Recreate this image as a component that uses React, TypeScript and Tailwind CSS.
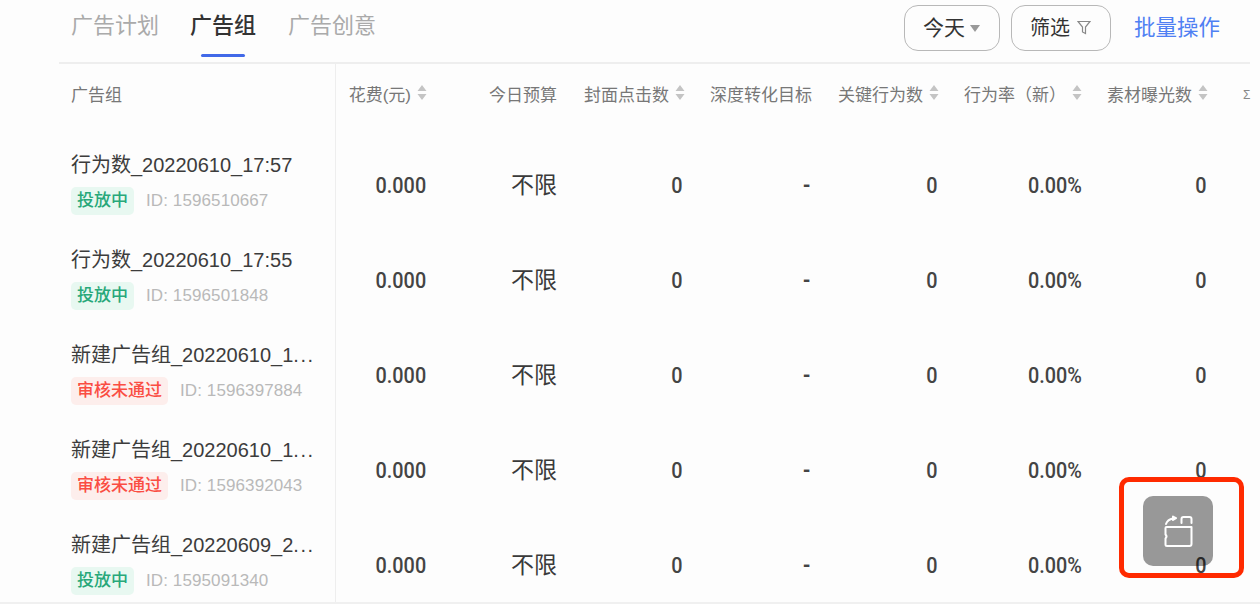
import React from "react";

const cjk = '"Liberation Sans","Noto Sans CJK SC",sans-serif';

function Sort() {
  return (
    <svg width="10" height="17" viewBox="0 0 10 17" className="ml-[6px] shrink-0">
      <path d="M5 1 L9.5 7 H0.5 Z M0.5 10 H9.5 L5 16 Z" fill="#c4c4c4" />
    </svg>
  );
}

const headers: { t: string; s?: boolean }[] = [
  { t: "花费(元)", s: true },
  { t: "今日预算" },
  { t: "封面点击数", s: true },
  { t: "深度转化目标" },
  { t: "关键行为数", s: true },
  { t: "行为率（新）", s: true },
  { t: "素材曝光数", s: true },
];

const rows = [
  { name: "行为数_20220610_17:57", more: false, tag: "投放中", id: "1596510667", ok: true },
  { name: "行为数_20220610_17:55", more: false, tag: "投放中", id: "1596501848", ok: true },
  { name: "新建广告组_20220610_1", more: true, tag: "审核未通过", id: "1596397884", ok: false },
  { name: "新建广告组_20220610_1", more: true, tag: "审核未通过", id: "1596392043", ok: false },
  { name: "新建广告组_20220609_2", more: true, tag: "投放中", id: "1595091340", ok: true },
];

const grid = "grid grid-cols-[336px_91px_130px_128px_127px_127px_143px_126px_52px]";

function Num({ v, pr, dash }: { v: string; pr: string; dash?: boolean }) {
  return (
    <div className={"flex items-center justify-end " + pr}>
      <span
        className={
          "font-['Roboto'] text-[22px] text-[#444444] origin-right scale-x-[0.9] tracking-[0px] " +
          (dash ? "font-bold" : "font-medium")
        }
      >
        {v}
      </span>
    </div>
  );
}

function Watermark() {
  const tiles: React.ReactNode[] = [];
  for (let r = -3; r < 9; r++) {
    for (let c = -1; c < 5; c++) {
      tiles.push(
        <div
          key={`${r}-${c}`}
          className="absolute rotate-45 origin-top-left whitespace-nowrap text-[24px] leading-[35px] text-black/[0.022]"
          style={{ left: c * 340 + 54, top: r * 78 - 7 }}
        >
          wangyongwei
          <br />
          2022/06/10 19:12:26
        </div>
      );
    }
  }
  return <div className="absolute inset-0 overflow-hidden pointer-events-none">{tiles}</div>;
}

export default function App() {
  return (
    <div className="relative w-[1260px] h-[604px] overflow-hidden bg-[#fdfdfd]" style={{ fontFamily: cjk }}>
      <div className="ml-[59px] mr-[10px] h-[64px] border-b-2 border-[#eeeeee] flex items-start pl-[12px] pr-[30px]">
        <div className="flex text-[22px] text-[#aaaaaa] leading-[26px] pt-[13px] whitespace-nowrap">
          <span>广告计划</span>
          <span className="relative ml-[31px] font-medium text-[#333333]">
            广告组
            <span className="absolute left-[11px] top-[41px] w-[44px] h-[3px] rounded-full bg-[#4169e8]" />
          </span>
          <span className="ml-[32px]">广告创意</span>
        </div>
        <div className="ml-auto flex items-center pt-[5px] whitespace-nowrap">
          <div className="w-[96px] h-[46px] rounded-[14px] border border-[#b8b8b8] flex items-center pl-[18px] text-[21px] text-[#333333]">
            今天
            <svg width="10" height="7" viewBox="0 0 10 7" className="ml-[5px]">
              <path d="M0 0 H10 L5 7 Z" fill="#999999" />
            </svg>
          </div>
          <div className="ml-[11px] w-[100px] h-[46px] rounded-[14px] border border-[#b8b8b8] flex items-center pl-[18px] text-[20px] text-[#333333]">
            筛选
            <svg width="14" height="15" viewBox="0 0 14 15" className="ml-[7px] mb-[2px]" fill="none" stroke="#888888" strokeWidth="1.2">
              <path d="M1 1.5 H13 L8.5 7 V13.5 L5.5 12 V7 Z" />
            </svg>
          </div>
          <span className="ml-[23px] text-[21.5px] leading-[26px] text-[#4f80f3]">批量操作</span>
        </div>
      </div>

      <div className={grid + " h-[74px]"}>
        <div className="border-r border-[#eeeeee] pl-[71px] pt-[20px] text-[17px] text-[#777777] leading-[24px]">广告组</div>
        {headers.map((h, i) => (
          <div key={i} className="flex items-start justify-end pt-[20px] text-[17px] text-[#777777] leading-[24px] whitespace-nowrap">
            <span>{h.t}</span>
            {h.s ? <Sort /> : null}
          </div>
        ))}
        <div className="pl-[35px] pt-[24px] text-[12px] leading-[14px] text-[#888888] overflow-hidden">Σ</div>
      </div>

      {rows.map((r, i) => (
        <div key={i} className={grid + " h-[95px]"}>
          <div className="border-r border-[#eeeeee] pl-[71px] pt-[13px]">
            <div className="text-[20px] leading-[28px] text-[#3c3c3c] whitespace-nowrap">
              {r.name}
              {r.more ? <span className="tracking-[1.5px]">...</span> : null}
            </div>
            <div className="flex items-center mt-[8px]">
              <span
                className={
                  "h-[28px] px-[6px] rounded-[5px] flex items-center text-[17px] font-medium " +
                  (r.ok ? "bg-[#e8f8f1] text-[#28a87a]" : "bg-[#fdeeec] text-[#fa4d43]")
                }
              >
                {r.tag}
              </span>
              <span className="ml-[12px] text-[17px] tracking-[0.1px] text-[#b9b9b9]">ID: {r.id}</span>
            </div>
          </div>
          <Num v="0.000" pr="pr-[1px]" />
          <div className="flex items-center justify-end text-[23px] text-[#3a3a3a]">不限</div>
          <Num v="0" pr="pr-[2px]" />
          <Num v="-" pr="pr-[1px]" dash />
          <Num v="0" pr="pr-[1px]" />
          <Num v="0.00%" pr="pr-0" />
          <Num v="0" pr="pr-[1px]" />
          <div />
        </div>
      ))}

      <Watermark />
      <div className="absolute left-0 right-0 bottom-0 h-[2px] bg-[#f0f0f0]" />

      <div className="absolute left-[1119px] top-[477px] w-[125px] h-[101px] rounded-[10px] border-[5px] border-[#ff2a00]">
        <div className="absolute left-[19px] top-[14px] w-[70px] h-[70px] rounded-[10px] bg-black/40 flex items-center justify-center">
          <svg width="30" height="34" viewBox="0 0 30 34" fill="none" stroke="#ffffff" strokeWidth="2" strokeLinecap="round" strokeLinejoin="round">
            <path d="M3.5 13 H28.5 V30 Q28.5 32 26.5 32 H4 Q2.5 32 2.5 30.5 V24.5 Q4.5 22.5 2.5 20.5 V14 Q2.5 13 3.5 13 Z" />
            <path d="M18.5 9 V5 Q18.5 3 20.5 3 H26.5 Q28.5 3 28.5 5 V9" />
            <path d="M3 10 Q4.5 5.5 10 4.5" />
            <path d="M10 2.5 L13 4.2 L10 6 Z" fill="#ffffff" />
          </svg>
        </div>
      </div>
    </div>
  );
}
